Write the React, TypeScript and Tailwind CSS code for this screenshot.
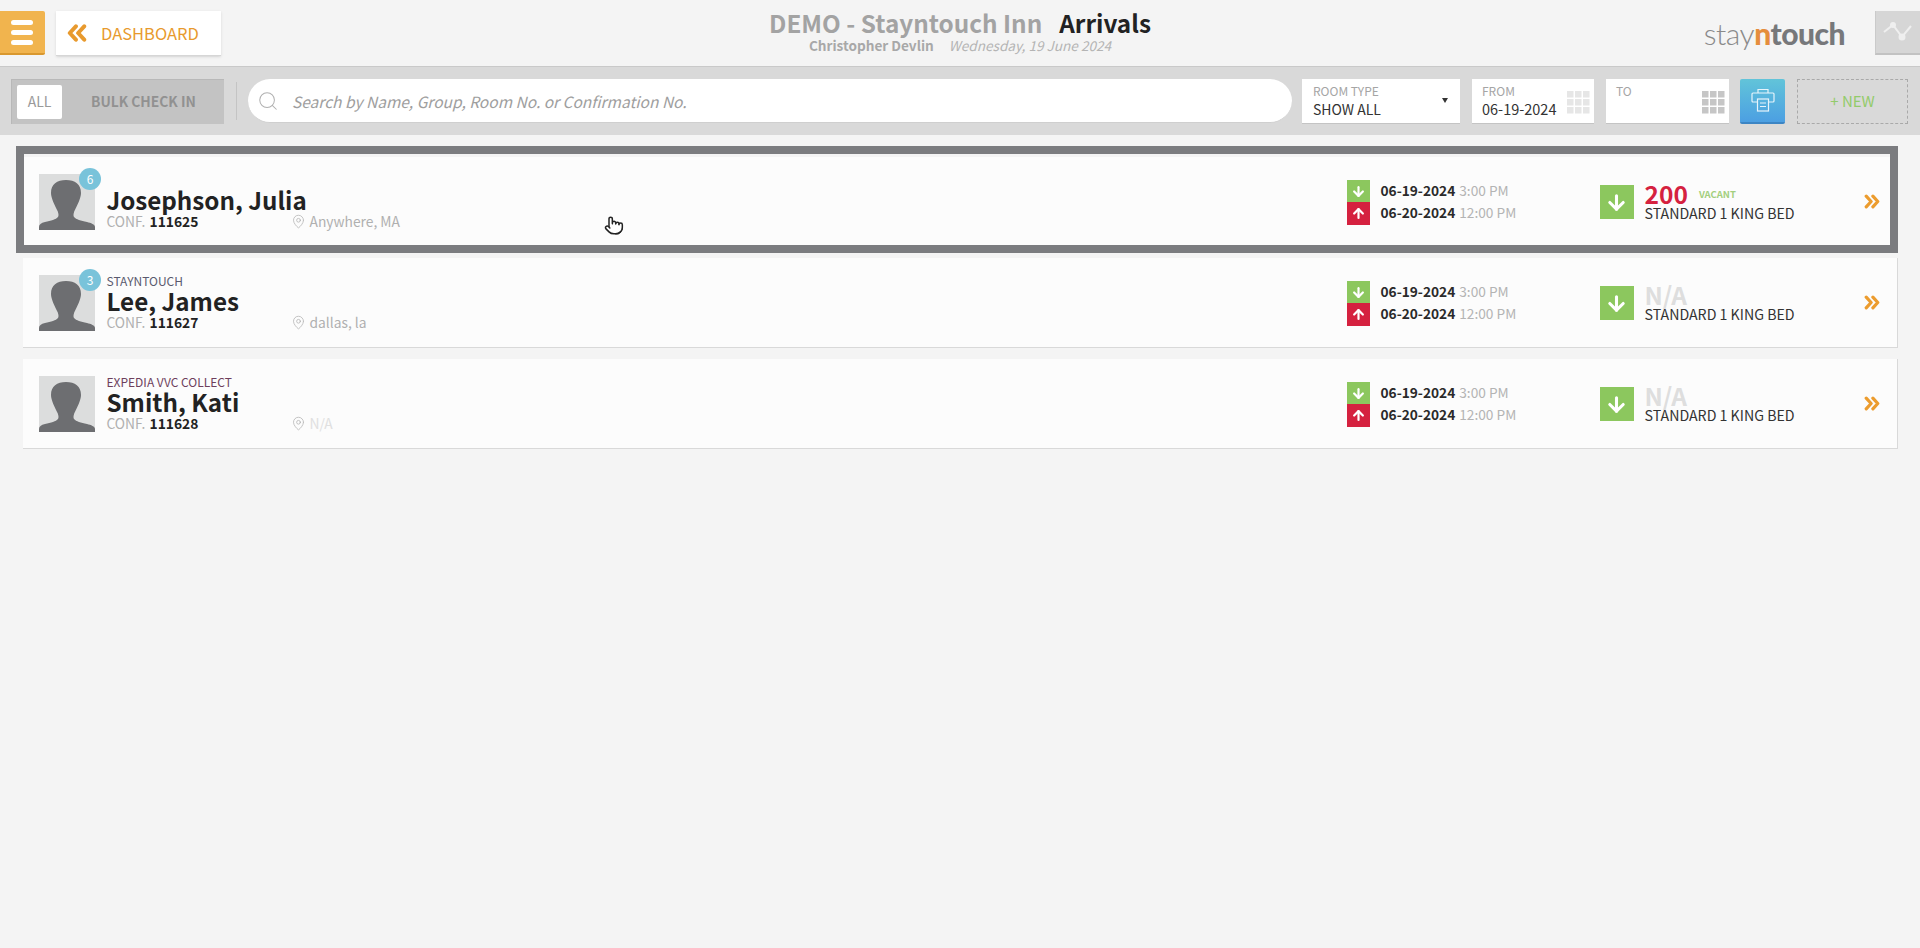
import React from 'react'
import { Search, MapPin, ArrowDown, ArrowUp, Pointer } from 'lucide-react'

const FONT = "font-['Noto_Sans_CJK_SC','Noto_Sans',sans-serif]"

type Reservation = {
  group: string
  groupColor: string
  name: string
  conf: string
  location: string
  locationMuted?: boolean
  badge?: string
  room: string
  vacant?: boolean
}

const reservations: Reservation[] = [
  { group: '', groupColor: '', name: 'Josephson, Julia', conf: '111625', location: 'Anywhere, MA', badge: '6', room: '200', vacant: true },
  { group: 'STAYNTOUCH', groupColor: 'text-[#5a5a6e]', name: 'Lee, James', conf: '111627', location: 'dallas, la', badge: '3', room: 'N/A' },
  { group: 'EXPEDIA VVC COLLECT', groupColor: 'text-[#6e3f5c]', name: 'Smith, Kati', conf: '111628', location: 'N/A', locationMuted: true, room: 'N/A' },
]

const DoubleChevron: React.FC<{ left?: boolean; className: string }> = ({ left, className }) => (
  <svg viewBox="0 0 18 16" fill="none" stroke="currentColor" strokeWidth="3.600" strokeLinejoin="round" strokeLinecap="round" className={className}>
    {left ? <path d="M8 2 2.500 8 8 14M15.500 2 10 8l5.500 6" /> : <path d="M2.500 2 8 8l-5.500 6M10 2l5.500 6-5.500 6" />}
  </svg>
)

const Avatar: React.FC<{ badge?: string }> = ({ badge }) => (
  <div className="relative w-[56px] h-[56px] bg-[#dcdddd] shrink-0">
    <svg viewBox="0 0 56 56" className="w-[56px] h-[56px]">
      <path
        fill="#6d6e71"
        d="M0 56v-3c0-2.500 2-4 6-5 6-1.500 11-2.500 13-5 .8-1 .6-3-.2-5.500C15.500 31 12 24 12 19 12 10 18 6 27 6s15 4 15 13c0 5-3.500 12-6.800 18.500-.8 2.500-1 4.500-.2 5.500 2 2.500 7 3.500 13 5 4 1 8 2.500 8 5v3z"
      />
    </svg>
    {badge && (
      <div className="absolute -top-[6px] left-[40px] w-[22px] h-[22px] rounded-full bg-[#79c3da] text-white text-[12px] flex items-center justify-center">
        {badge}
      </div>
    )}
  </div>
)

const DateLine: React.FC<{ date: string; time: string }> = ({ date, time }) => (
  <div className="h-[22px] flex items-center pl-[11px] text-[13.700px] leading-none whitespace-nowrap">
    <span className="font-bold text-[#2a2a2a]">{date}</span>
    <span className="ml-[4px] text-[#b4b4b4]">{time}</span>
  </div>
)

const Row: React.FC<{ item: Reservation; focused?: boolean }> = ({ item, focused }) => (
  <div className="relative h-[90px] ml-[23px] mr-[22px] mb-[11px] bg-[#fcfcfc] border-b border-[#d9d9d9] border-r flex items-start">
    <div className="mt-[17px] ml-[16px]">
      <Avatar badge={item.badge} />
    </div>
    <div className="ml-[11.500px] mt-[14px] w-[1240px] shrink-0">
      <div className={`h-[18px] text-[12px] leading-[18px] ${item.groupColor}`}>{item.group}</div>
      <div className="h-[24px] text-[24.200px] leading-[22px] font-bold text-[#222]">{item.name}</div>
      <div className="h-[16px] flex items-center text-[13.800px] leading-[16px]">
        <div className="w-[185px]">
          <span className="text-[#b0b0b0]">CONF.</span> <span className="font-bold text-[#222] ml-[1px]">{item.conf}</span>
        </div>
        <MapPin className="w-[15px] h-[17px] text-[#b0b0b0] -ml-[1px]" strokeWidth={1.200} />
        <span className={`ml-[4px] ${item.locationMuted ? 'text-[#e0e0e0]' : 'text-[#b0b0b0]'}`}>{item.location}</span>
      </div>
    </div>
    <div className="mt-[23px] w-[253px] shrink-0 flex">
      <div className="w-[23px] shrink-0">
        <div className="h-[22px] bg-[#8cc75e] flex items-center justify-center">
          <ArrowDown className="w-[15px] h-[15px] text-white" strokeWidth={3.500} />
        </div>
        <div className="h-[23px] bg-[#d5213f] flex items-center justify-center">
          <ArrowUp className="w-[15px] h-[15px] text-white" strokeWidth={3.500} />
        </div>
      </div>
      <div>
        <DateLine date="06-19-2024" time="3:00 PM" />
        <DateLine date="06-20-2024" time="12:00 PM" />
      </div>
    </div>
    <div className="mt-[28px] w-[34px] h-[34px] shrink-0 bg-[#8cc75e] flex items-center justify-center">
      <ArrowDown className="w-[23px] h-[23px] text-white" strokeWidth={3.200} />
    </div>
    <div className="ml-[11px] mt-[23px] w-[219px] shrink-0">
      <div className="h-[24px] pt-[4px] flex items-center">
        <span className={`text-[24.500px] leading-none font-bold ${item.vacant ? 'text-[#d5213f]' : 'text-[#dedede]'}`}>{item.room}</span>
        {item.vacant && <span className="ml-[11px] text-[9.500px] font-bold text-[#a3cf7e]">VACANT</span>}
      </div>
      <div className="text-[14.200px] leading-[18px] text-[#333] whitespace-nowrap">STANDARD 1 KING BED</div>
    </div>
    <DoubleChevron className="mt-[37px] w-[16px] h-[15px] text-[#ec9c2e] shrink-0" />
    {focused && (
      <div className="absolute -top-[11px] -bottom-[7px] -left-[7px] -right-[1px] border-[8px] border-[#7b7c7f] pointer-events-none" />
    )}
  </div>
)

const CalendarGrid: React.FC<{ color: string }> = ({ color }) => (
  <svg width="23" height="23" viewBox="0 0 23 23" className="shrink-0">
    {[0, 8, 16].map((y) =>
      [0, 8, 16].map((x) => <rect key={`${x}-${y}`} x={x} y={y} width="6.500" height="6.500" fill={color} />)
    )}
  </svg>
)

const DateField: React.FC<{ label: string; value?: string; gridColor: string; className: string }> = ({ label, value, gridColor, className }) => (
  <div className={`h-[45px] bg-white border-b border-[#c4c4c4] flex justify-between pl-[10px] pr-[4px] shrink-0 ${className}`}>
    <div>
      <div className="mt-[3px] text-[12px] leading-[18px] text-[#a5a5a5]">{label}</div>
      <div className="text-[14.500px] leading-[18px] text-[#333]">{value}</div>
    </div>
    <div className="mt-[12px]">
      <CalendarGrid color={gridColor} />
    </div>
  </div>
)

const App: React.FC = () => {
  return (
    <div className={`relative min-h-[948px] bg-[#f4f4f4] ${FONT}`}>
      {/* header */}
      <header className="h-[67px] grid grid-cols-[1fr_auto_1fr] border-b border-[#c9c9c9]">
        <div className="flex items-start pt-[11px]">
          <div className="w-[45px] h-[44px] bg-[#f1b44e] border-b-2 border-[#d9982f] rounded-r-[2px] flex flex-col justify-center gap-[5px] pl-[11px]">
            <div className="w-[22px] h-[5px] rounded-full bg-white" />
            <div className="w-[22px] h-[5px] rounded-full bg-white" />
            <div className="w-[22px] h-[5px] rounded-full bg-white" />
          </div>
          <div className="ml-[11px] w-[165px] h-[45px] bg-white border-b border-[#d6d6d6] shadow-sm flex items-center pl-[11px]">
            <DoubleChevron left className="w-[20px] h-[18px] text-[#e89a2e]" />
            <span className="ml-[14px] text-[16.500px] text-[#e89a2e]">DASHBOARD</span>
          </div>
        </div>
        <div className="text-center pt-[8px]">
          <div className="text-[24.300px] leading-[30px] font-bold whitespace-nowrap">
            <span className="text-[#a3a3a3]">DEMO - Stayntouch Inn</span>
            <span className="ml-[17px] text-[#222]">Arrivals</span>
          </div>
          <div className="text-[13.600px] leading-[15px] whitespace-nowrap">
            <span className="font-bold text-[#a8a8a8]">Christopher Devlin</span>
            <span className="ml-[15px] italic text-[#b4b4b4]">Wednesday, 19 June 2024</span>
          </div>
        </div>
        <div className="flex items-start justify-end pt-[11px]">
          <div className="mr-[30px] mt-[2px] text-[30px] leading-[40px] font-['Lato',sans-serif] text-[#8a8a8a] tracking-[-0.5px]">
            <span className="font-light">stay</span>
            <span className="font-black text-[#e58d3c]">n</span>
            <span className="font-black text-[#77787b]">touch</span>
          </div>
          <div className="w-[45px] h-[44px] bg-[#d6d6d6] border-b-2 border-[#c2c2c2] border-l border-l-[#cacaca] flex items-center pl-[7px]">
            <svg width="30" height="20" viewBox="0 0 30 20" fill="none" stroke="#efefef" strokeWidth="2">
              <path d="M1 10 10 3l9 12 9-11" />
              <circle cx="10" cy="3" r="2" fill="#efefef" />
              <circle cx="19" cy="15" r="2.500" fill="#efefef" />
            </svg>
          </div>
        </div>
      </header>

      {/* filter bar */}
      <div className="h-[68px] bg-[#d9d9d9] flex items-center pl-[11px]">
        <div className="w-[213px] h-[45px] bg-[#c3c3c3] border-l border-t border-[#b8b8b8] flex items-center pl-[5px] shrink-0">
          <div className="w-[45px] h-[34px] bg-white rounded-[2px] flex items-center justify-center text-[14px] text-[#9a9a9a]">ALL</div>
          <span className="ml-[29px] text-[13.800px] font-bold text-[#919191] whitespace-nowrap">BULK CHECK IN</span>
        </div>
        <div className="ml-[12px] w-px h-[38px] bg-[#c4c4c4] shrink-0" />
        <div className="ml-[11px] w-[1044px] h-[44px] bg-white rounded-[22px] border-b border-[#cfcfcf] flex items-center pl-[9px] shrink-0">
          <Search className="w-[22px] h-[22px] text-[#b0b0b0]" strokeWidth={1.100} />
          <span className="ml-[13px] pt-[3px] text-[15.500px] italic text-[#9e9e9e]">Search by Name, Group, Room No. or Confirmation No.</span>
        </div>
        <div className="ml-[10px] w-[158px] h-[45px] bg-white border-b border-[#c4c4c4] flex items-start justify-between pl-[11px] pr-[12px] shrink-0">
          <div>
            <div className="mt-[3px] text-[12px] leading-[18px] text-[#a5a5a5]">ROOM TYPE</div>
            <div className="text-[14px] leading-[18px] text-[#333]">SHOW ALL</div>
          </div>
          <div className="mt-[19px] w-0 h-0 border-l-[3.500px] border-r-[3.500px] border-t-[5px] border-l-transparent border-r-transparent border-t-[#333]" />
        </div>
        <DateField label="FROM" value="06-19-2024" gridColor="#e6e6e6" className="ml-[12px] w-[122px]" />
        <DateField label="TO" gridColor="#c6c6c6" className="ml-[12px] w-[123px]" />
        <div className="ml-[11px] w-[45px] h-[45px] rounded-[2px] bg-gradient-to-b from-[#62c4d9] to-[#4c9fe2] border-b-2 border-[#3c85c4] flex items-center justify-center shrink-0">
          <svg width="24" height="24" viewBox="0 0 24 24" fill="none" stroke="#e6f4fb" strokeWidth="1.200">
            <path d="M6 14H2a1 1 0 0 1-1-1V6a1 1 0 0 1 1-1h20a1 1 0 0 1 1 1v7a1 1 0 0 1-1 1h-4" />
            <path d="M7 5V1.500h10V5" />
            <rect x="6.500" y="11" width="11" height="12" />
            <path d="M9 15h6M9 18.500h6" />
          </svg>
        </div>
        <div className="ml-[12px] w-[111px] h-[45px] border border-dashed border-[#a9a9a9] flex items-center justify-center text-[15px] text-[#93cb6b] shrink-0">
          + NEW
        </div>
      </div>

      {/* reservations */}
      <div className="pt-[22px]">
        {reservations.map((item, i) => (
          <Row key={item.conf} item={item} focused={i === 0} />
        ))}
      </div>

      {/* mouse cursor */}
      <div className="absolute left-[604px] top-[215px]">
        <Pointer className="w-[20px] h-[21px] text-[#222] fill-white" strokeWidth={1.800} />
      </div>
    </div>
  )
}

export default App
